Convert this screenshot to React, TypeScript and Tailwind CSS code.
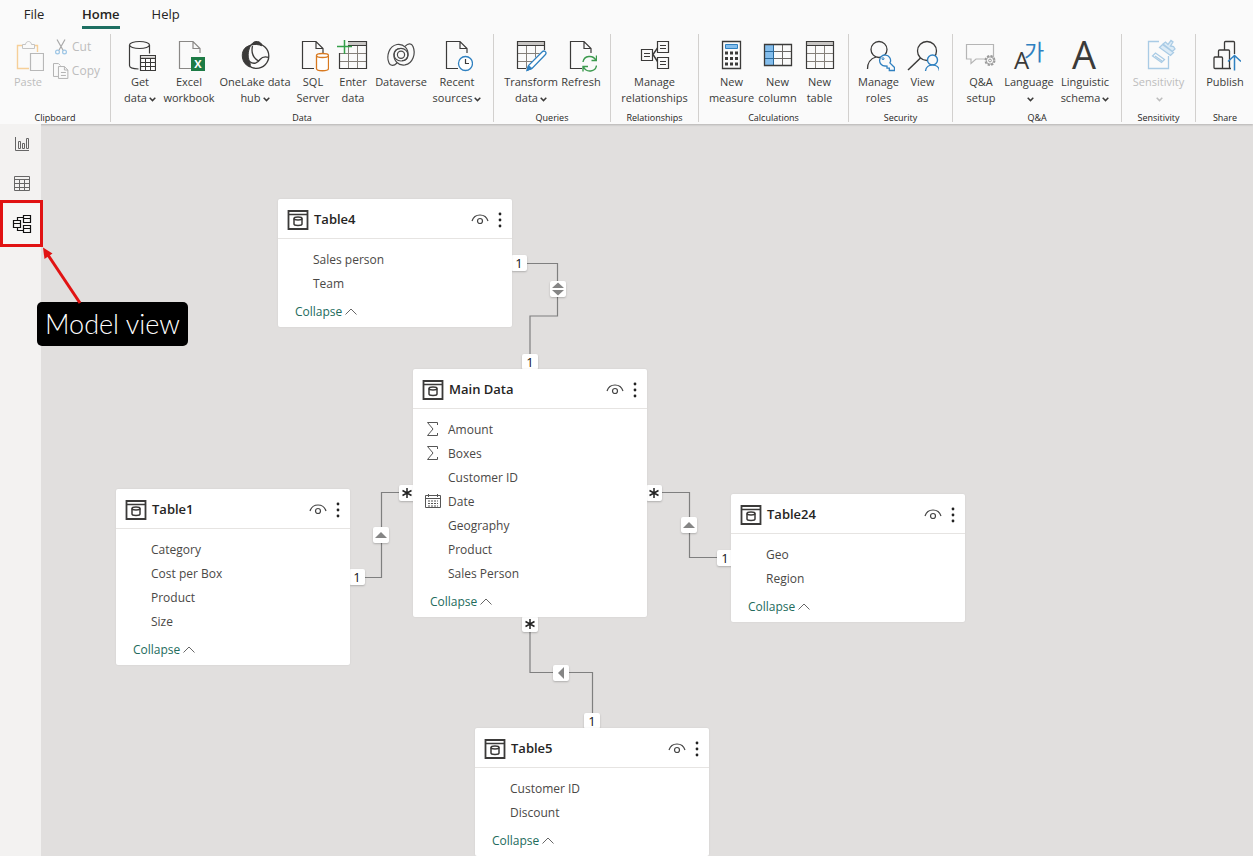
import type { ReactNode } from "react";

const INK = "#3b3a39";
const BLUE = "#2f80c0";

function Icon({ children, className = "" }: { children: ReactNode; className?: string }) {
  return (
    <svg
      width="32"
      height="32"
      viewBox="0 0 32 32"
      fill="none"
      stroke={INK}
      aria-hidden="true"
      className={`shrink-0 ${className}`}
    >
      {children}
    </svg>
  );
}

function PasteIcon() {
  return (
    <Icon>
      <path d="M17 28.5H5.5v-23H10M22 5.5h3.5V12" stroke="#f6cf98" strokeWidth="1.4" />
      <path d="M10.5 8.5v-4h3c.4-4 5.600-4 6 0h3v4z" stroke="#c4c4c4" />
      <path d="M18.500 13.500h13v17h-13z" fill="#fafafa" stroke="#b8b8b8" strokeWidth="1.200" />
    </Icon>
  );
}

function CutIcon() {
  return (
    <svg width="18" height="18" viewBox="0 0 18 18" fill="none" stroke="#a9a9a9" strokeWidth="1.2" aria-hidden="true">
      <path d="M5 1.500 11.500 13M13 1.500 6.500 13" />
      <circle cx="5.500" cy="14" r="1.900" stroke="#9dc6e6" />
      <circle cx="12.500" cy="14" r="1.900" stroke="#9dc6e6" />
    </svg>
  );
}

function CopyIcon() {
  return (
    <svg width="18" height="18" viewBox="0 0 18 18" fill="none" stroke="#b3b3b3" aria-hidden="true">
      <path d="M6 14.500H1.500v-13h5l2 2" />
      <path d="M6.500 4.500h6l3.500 3.500v8.500H6.500z M12.500 4.500V8H16M9 10.500h5M9 13.500h5" />
    </svg>
  );
}

function GetDataIcon() {
  return (
    <Icon>
      <ellipse cx="15.500" cy="5" rx="10" ry="3.500" strokeWidth="1.200" />
      <path d="M5.500 5v20.500c0 2 3.500 3.300 9 3.500M25.500 5v8.500" strokeWidth="1.200" />
      <path d="M16.500 15.500h15v15h-15z" fill="#fff" strokeWidth="1.200" />
      <path d="M17 17.500h14" stroke="#c8c6c4" strokeWidth="2" />
      <path d="M16.500 18.500h15M16.500 22.500h15M16.500 26.500h15M21.500 18v12.500M26.500 18v12.500" />
    </Icon>
  );
}

function DocShape({ color = INK }: { color?: string }) {
  return <path d="M18 28.500H6.500v-27H20l7 7V13M20 1.500v7h7" stroke={color} strokeWidth="1.200" />;
}

function ExcelIcon() {
  return (
    <Icon>
      <DocShape color="#8a8886" />
      <path d="M18 17h14v14H18z" fill="#1d7b45" stroke="none" />
      <text x="25" y="28" textAnchor="middle" fontSize="11" fontWeight="700" fill="#fff" stroke="none" fontFamily="Open Sans, sans-serif">
        X
      </text>
    </Icon>
  );
}

function OneLakeIcon() {
  return (
    <Icon>
      <circle cx="17.500" cy="16" r="12.300" strokeWidth="1.300" />
      <path d="M11.500 5.500C5 6.500 2.500 12 3.500 18c.8 4.500 3.500 7.500 7.500 9 .5-2 .2-4-.6-6C8.700 17 8.500 12 11.500 5.500z" fill={INK} />
      <path d="M12.500 5C13.500 1 20 0 22.500 4c.3.500.4 1.200.3 1.800-3.200-1.500-7-1.700-10.300-.8z" fill={INK} />
      <path d="M13.500 6C12 12.500 14.500 18 19.500 21M10.500 21.500c4.500 3.300 8 1.500 10.500-2 2-2.500 5.300-3.200 8.500-2.200" strokeWidth="1.300" />
    </Icon>
  );
}

function SqlIcon() {
  return (
    <Icon>
      <g transform="translate(-1 0)">
        <DocShape />
      </g>
      <path d="M19.500 15.500v13c0 3 12 3 12 0v-13" fill="#fff" stroke="#d8791f" strokeWidth="1.300" />
      <ellipse cx="25.500" cy="15.500" rx="6" ry="2" fill="#fff" stroke="#d8791f" strokeWidth="1.300" />
    </Icon>
  );
}

function TableIcon({ plus = false }: { plus?: boolean }) {
  return (
    <Icon>
      <path d="M3 2h26v3H3z" fill="#c8c6c4" stroke="none" />
      <path d="M2.500 13.500h27M2.500 21.500h27M11.500 5.500v23M20.500 5.500v23" stroke="#85807a" />
      <path d="M2.500 1.500h27v27h-27z M2.500 5.500h27" strokeWidth="1.200" />
      {plus && (
        <>
          <path d="M0 0h11v13H0z" fill="#fafafa" stroke="none" />
          <path d="M7.500-1v15M0 6.500h15" stroke="#35a04a" strokeWidth="1.500" />
        </>
      )}
    </Icon>
  );
}

function DataverseIcon() {
  const arm =
    "M12 23C9 26 5.500 26.500 4 23 1 16 4 6 12 4.500 19 3.500 23.500 9 23 15 22.500 19 19.500 21 16 21 12 21 9 18 9 14.500 9 11 12 8.500 15 8.700";
  return (
    <Icon>
      <g strokeWidth="1.200" stroke="#4a4a4a">
        <path d={arm} />
        <path d={arm} transform="rotate(180 16 14.700)" />
        <circle cx="16" cy="14.700" r="3.600" />
      </g>
    </Icon>
  );
}

function RecentIcon() {
  return (
    <Icon>
      <g transform="translate(-1 0)">
        <DocShape />
      </g>
      <circle cx="24.500" cy="23.500" r="7" fill="#fff" stroke={BLUE} strokeWidth="1.300" />
      <path d="M24.500 19v4.500H28" strokeWidth="1.200" />
    </Icon>
  );
}

function TransformIcon() {
  return (
    <Icon>
      <path d="M3 2h26v3H3z" fill="#c8c6c4" stroke="none" />
      <path d="M2.500 13.500h22M2.500 21.500h15M11.500 5.500v23M20.500 5.500v12" stroke="#85807a" />
      <path d="M11 28.500H2.500v-27h27V10M2.500 5.500h27" strokeWidth="1.200" />
      <path d="M12 30.500l1.500-5L27 12c2.500-2.500 5.500.5 3 3L17 28.500z" fill="#fff" stroke={BLUE} strokeWidth="1.300" />
      <path d="M12 30.500l1.500-5 3.500 3z" fill={BLUE} stroke={BLUE} />
    </Icon>
  );
}

function RefreshIcon() {
  return (
    <Icon>
      <g transform="translate(-1 0)">
        <DocShape />
      </g>
      <path d="M17 15h15v16H17z" fill="#fafafa" stroke="none" />
      <path d="M18 22c1-6.500 10-7.500 13-1.500M31.500 25.500c-1 6.500-10 7.500-13 1.500M31.500 15.500v5h-5M18 31.500v-5h5" stroke="#3c9a4e" strokeWidth="1.400" />
    </Icon>
  );
}

function RelationshipsIcon() {
  return (
    <Icon>
      <path d="M14 14.500 18.500 8M14 14.500l4.500 7" strokeWidth="1.400" />
      <path d="M2.500 9.500h11v11h-11zM18.500 1.500h11v11h-11zM18.500 17.500h11v11h-11z" strokeWidth="1.200" />
      <path d="M5 13.500h6M5 16.500h6M21 5.500h6M21 8.500h6M21 21.500h6M21 24.500h6" />
    </Icon>
  );
}

function MeasureIcon() {
  return (
    <Icon>
      <path d="M6.500 1.500h18v27h-18z" strokeWidth="1.300" />
      <path d="M9.500 4.500h12v4h-12z" fill="#83bdec" stroke={BLUE} />
      <path d="M9 13h3M14 13h3M19 13h3M9 18.500h3M14 18.500h3M19 18.500h3M9 24h3M14 24h3M19 24h3" strokeWidth="3" />
    </Icon>
  );
}

function ColumnIcon() {
  return (
    <Icon>
      <path d="M3 5h8v20H3z" fill="#83bdec" stroke="none" />
      <path d="M11.500 11.500h18M11.500 18.500h18M20.500 4.500v21" stroke="#6b6865" />
      <path d="M2.500 11.500h9M2.500 18.500h9M11.500 4.500v21" stroke="#28689b" />
      <path d="M2.500 4.500h27v21h-27z" strokeWidth="1.300" />
    </Icon>
  );
}

function RolesIcon() {
  return (
    <Icon>
      <circle cx="16" cy="9.500" r="8" strokeWidth="1.300" />
      <path d="M4.500 29c0-6.500 3.500-10.500 8.500-12" strokeWidth="1.300" />
      <path
        d="M27.500 21.500a5.500 5.500 0 1 0-5.500 4.500l2 .2v2h2.300v2.300h5.200v-3l-4.600-4.600z"
        fill="#fafafa"
        stroke={BLUE}
        strokeWidth="1.300"
      />
      <circle cx="20" cy="18.700" r="1" stroke={BLUE} />
    </Icon>
  );
}

function ViewAsIcon() {
  return (
    <Icon>
      <circle cx="20" cy="11" r="9.500" strokeWidth="1.300" />
      <path d="M13.500 18 1 30" strokeWidth="1.500" />
      <circle cx="25.500" cy="20" r="5" fill="#fafafa" stroke={BLUE} strokeWidth="1.400" />
      <path d="M18.500 31c.5-8 13.500-8 14 0" fill="#fafafa" stroke={BLUE} strokeWidth="1.400" />
    </Icon>
  );
}

function QnaIcon() {
  return (
    <Icon>
      <path d="M1.500 4.500h27v14.500H11l-5 4.500V19H1.500z" stroke="#b5b5b5" strokeWidth="1.200" />
      <circle cx="25" cy="20.500" r="4.500" fill="#fafafa" stroke="#999" strokeWidth="2" strokeDasharray="2.200 1.330" />
      <circle cx="25" cy="20.500" r="3.700" fill="#fafafa" stroke="#999" />
      <circle cx="25" cy="20.500" r="1.400" stroke="#999" />
    </Icon>
  );
}

function LanguageIcon() {
  return (
    <Icon className="overflow-visible">
      <text x="1" y="29" fontSize="24" fill={INK} stroke="none" fontFamily="Open Sans, sans-serif">
        A
      </text>
      <text x="11" y="20" fontSize="22" fill={BLUE} stroke="none" fontFamily="Noto Sans CJK KR, sans-serif">
        가
      </text>
    </Icon>
  );
}

function LinguisticIcon() {
  return (
    <Icon className="overflow-visible">
      <text x="15" y="29" textAnchor="middle" fontSize="38" fill={INK} stroke="none" fontFamily="Open Sans, sans-serif">
        A
      </text>
    </Icon>
  );
}

function SensitivityIcon() {
  return (
    <Icon className="overflow-visible">
      <g stroke="#a9cbe5" strokeWidth="1.300">
        <path d="M16 1.500H5.500v27h20V16" />
        <path d="M9.500 16l3-3 9 6.500-3 3z M12 16l7 5" />
        <path d="M16.500 7.500l3-3 11 8-3 3z M20 4l2.500-2 2.500 2.500 3-4 2 1.500-2.500 4 3 .5 1.500 2.500-2.500 2.500z" fill="#dcebf6" />
      </g>
    </Icon>
  );
}

function PublishIcon() {
  return (
    <Icon>
      <path d="M5.500 17h7a1 1 0 0 1 1 1v10.500H6a1 1 0 0 1-1-1V18a1 1 0 0 1 1-1M9.500 17v-6a1 1 0 0 1 1-1h9M13.500 28.500h7V11a1 1 0 0 0-1-1M15.500 10V2.500a1 1 0 0 1 1-1h8a1 1 0 0 1 1 1V14M20 28.500h2" strokeWidth="1.300" />
      <path d="M25.500 30.500v-15M19 21.500l6.500-6 6.500 6" stroke={BLUE} strokeWidth="1.500" />
    </Icon>
  );
}

function Chevron() {
  return (
    <svg width="7" height="5" viewBox="0 0 7 5" fill="none" stroke="currentColor" strokeWidth="1.500" aria-hidden="true" className="ml-0.5 inline-block align-middle">
      <path d="M.7.800 3.500 3.600 6.300.800" />
    </svg>
  );
}

type Command = {
  top: string;
  bottom?: string;
  icon: ReactNode;
  width: string;
  menu?: boolean;
  disabled?: boolean;
};

function RibbonButton({ top, bottom, icon, width, menu, disabled }: Command) {
  return (
    <button
      type="button"
      disabled={disabled}
      className={`flex shrink-0 flex-col items-center whitespace-nowrap text-[11px] leading-4 ${width} ${
        disabled ? "text-[#bdbdbd]" : "text-[#3b3a39]"
      }`}
    >
      {icon}
      <span className="mt-0.5">{top}</span>
      <span className="h-4">
        {bottom}
        {menu && <Chevron />}
      </span>
    </button>
  );
}

function RibbonGroup({ label, width, children }: { label: string; width: string; children: ReactNode }) {
  return (
    <section aria-label={label} className={`flex flex-col items-center justify-between ${width}`}>
      <div className="flex justify-center pt-1.5">{children}</div>
      <h2 className="text-[9px] leading-3 text-[#252423]">{label}</h2>
    </section>
  );
}

const groups: { label: string; width: string; commands: Command[] }[] = [
  {
    label: "Data",
    width: "w-[382px] shrink-0",
    commands: [
      { top: "Get", bottom: "data", menu: true, icon: <GetDataIcon />, width: "w-[42px]" },
      { top: "Excel", bottom: "workbook", icon: <ExcelIcon />, width: "w-14" },
      { top: "OneLake data", bottom: "hub", menu: true, icon: <OneLakeIcon />, width: "w-[76px]" },
      { top: "SQL", bottom: "Server", icon: <SqlIcon />, width: "w-10" },
      { top: "Enter", bottom: "data", icon: <TableIcon plus />, width: "w-10" },
      { top: "Dataverse", icon: <DataverseIcon />, width: "w-14" },
      { top: "Recent", bottom: "sources", menu: true, icon: <RecentIcon />, width: "w-14" },
    ],
  },
  {
    label: "Queries",
    width: "w-[116px] shrink-0",
    commands: [
      { top: "Transform", bottom: "data", menu: true, icon: <TransformIcon />, width: "w-[58px]" },
      { top: "Refresh", icon: <RefreshIcon />, width: "w-[42px]" },
    ],
  },
  {
    label: "Relationships",
    width: "w-[87px] shrink-0",
    commands: [{ top: "Manage", bottom: "relationships", icon: <RelationshipsIcon />, width: "w-20" }],
  },
  {
    label: "Calculations",
    width: "w-[149px] shrink-0",
    commands: [
      { top: "New", bottom: "measure", icon: <MeasureIcon />, width: "w-[50px]" },
      { top: "New", bottom: "column", icon: <ColumnIcon />, width: "w-[42px]" },
      { top: "New", bottom: "table", icon: <TableIcon />, width: "w-[42px]" },
    ],
  },
  {
    label: "Security",
    width: "w-[103px] shrink-0",
    commands: [
      { top: "Manage", bottom: "roles", icon: <RolesIcon />, width: "w-11" },
      { top: "View", bottom: "as", icon: <ViewAsIcon />, width: "w-11" },
    ],
  },
  {
    label: "Q&A",
    width: "w-[168px] shrink-0",
    commands: [
      { top: "Q&A", bottom: "setup", icon: <QnaIcon />, width: "w-[42px]" },
      { top: "Language", menu: true, icon: <LanguageIcon />, width: "w-[54px]" },
      { top: "Linguistic", bottom: "schema", menu: true, icon: <LinguisticIcon />, width: "w-[58px]" },
    ],
  },
  {
    label: "Sensitivity",
    width: "w-[73px] shrink-0",
    commands: [{ top: "Sensitivity", menu: true, disabled: true, icon: <SensitivityIcon />, width: "w-16" }],
  },
  {
    label: "Share",
    width: "w-[58px] shrink-0",
    commands: [{ top: "Publish", icon: <PublishIcon />, width: "w-12" }],
  },
];

function Divider() {
  return <div className="mb-0.5 w-px shrink-0 bg-[#d2d0ce]" />;
}

function Ribbon() {
  return (
    <header className="relative z-10 shrink-0 bg-[#fafafa] shadow-[0_1px_2px_rgba(0,0,0,0.2)]">
      <nav className="flex h-[34px] items-start gap-5 pl-[15px] text-[13px] leading-5 text-[#252423]">
        <button type="button" className="w-[38px] pt-1">File</button>
        <button type="button" className="ml-[9px] border-b-3 border-[#1d6f62] pt-1 pb-0.5 font-semibold">Home</button>
        <button type="button" className="ml-3 pt-1">Help</button>
      </nav>
      <div className="flex h-[90px]">
        <RibbonGroup label="Clipboard" width="w-[110px] shrink-0">
          <RibbonButton top="Paste" icon={<PasteIcon />} width="w-9" disabled />
          <div className="-mt-0.5 ml-1.5 flex w-12 flex-col gap-1.5 text-xs leading-[18px] text-[#bdbdbd]">
            <button type="button" disabled className="flex items-center gap-0.5">
              <CutIcon />
              Cut
            </button>
            <button type="button" disabled className="flex items-center gap-0.5">
              <CopyIcon />
              Copy
            </button>
          </div>
        </RibbonGroup>
        {groups.map((g) => (
          <div key={g.label} className="flex">
            <Divider />
            <RibbonGroup label={g.label} width={g.width}>
              {g.commands.map((c) => (
                <RibbonButton key={`${c.top}${c.bottom}`} {...c} />
              ))}
            </RibbonGroup>
          </div>
        ))}
      </div>
    </header>
  );
}

function ViewRail() {
  return (
    <nav aria-label="Views" className="relative z-20 flex w-[41px] shrink-0 flex-col bg-[#f3f2f1]">
      <button type="button" aria-label="Report view" className="flex h-10 items-center justify-center pl-0.5">
        <svg width="20" height="20" viewBox="0 0 20 20" fill="none" stroke="#666" aria-hidden="true">
          <path d="M3.500 3v13.500H17M6.500 7.500h2v7h-2zM10.500 9.500h2v5h-2zM14.500 4.500h2v10h-2z" />
        </svg>
      </button>
      <button type="button" aria-label="Table view" className="flex h-10 items-center justify-center pl-0.5">
        <svg width="20" height="20" viewBox="0 0 20 20" fill="none" stroke="#666" aria-hidden="true">
          <path d="M2.500 2.500h15v14h-15zM2.500 5.500h15M2.500 9.500h15M2.500 13.500h15M7.500 5.500v11M12.500 5.500v11" />
        </svg>
      </button>
      <button
        type="button"
        aria-label="Model view"
        className="relative flex h-10 items-center justify-center border-l-3 border-[#1d6f62] bg-[#f7f6f5]"
      >
        <svg width="20" height="20" viewBox="0 0 20 20" fill="none" stroke="#111" strokeWidth="1.200" aria-hidden="true">
          <path d="M1.500 6.500h7v7h-7zM1.500 9.500h7M11.500 1.500h7v7h-7zM11.500 4.500h7M11.500 11.500h7v7h-7zM11.500 14.500h7M11.500 3.500h-6v3M5.500 13.500v3h6" />
        </svg>
        <span className="absolute -top-1 -left-[3px] h-[47px] w-[43px] border-3 border-[#e11313]" />
      </button>
    </nav>
  );
}

type Field = { name: string; kind?: "sum" | "date" };
type ModelTable = { name: string; place: string; fields: Field[] };

const tables: ModelTable[] = [
  { name: "Table4", place: "left-[237px] top-[75px]", fields: [{ name: "Sales person" }, { name: "Team" }] },
  {
    name: "Main Data",
    place: "left-[372px] top-[245px]",
    fields: [
      { name: "Amount", kind: "sum" },
      { name: "Boxes", kind: "sum" },
      { name: "Customer ID" },
      { name: "Date", kind: "date" },
      { name: "Geography" },
      { name: "Product" },
      { name: "Sales Person" },
    ],
  },
  {
    name: "Table1",
    place: "left-[75px] top-[365px]",
    fields: [{ name: "Category" }, { name: "Cost per Box" }, { name: "Product" }, { name: "Size" }],
  },
  { name: "Table24", place: "left-[690px] top-[370px]", fields: [{ name: "Geo" }, { name: "Region" }] },
  { name: "Table5", place: "left-[434px] top-[604px]", fields: [{ name: "Customer ID" }, { name: "Discount" }] },
];

function FieldIcon({ kind }: { kind?: Field["kind"] }) {
  if (kind === "sum")
    return (
      <svg width="16" height="16" viewBox="0 0 16 16" fill="none" stroke="#555" aria-hidden="true">
        <path d="M12.500 3V.500h-10L8 7l-5.500 6.500h10V11" />
      </svg>
    );
  if (kind === "date")
    return (
      <svg width="16" height="16" viewBox="0 0 16 16" fill="none" stroke="#555" aria-hidden="true">
        <path d="M.5 1.500h15v12H.5zM.5 4.500h15M3.500 0v3M12.500 0v3" />
        <path d="M3 7h10M3 9.500h10M3 12h10" strokeDasharray="2 1" />
      </svg>
    );
  return null;
}

function TableCard({ name, place, fields }: ModelTable) {
  return (
    <article className={`absolute w-[234px] rounded-xs bg-white shadow-[0_0_2px_rgba(0,0,0,0.08)] ${place}`}>
      <header className="flex h-10 items-center border-b border-[#e6e4e2] pr-2 pl-[9px]">
        <svg width="22" height="22" viewBox="0 0 22 22" fill="none" stroke={INK} strokeWidth="1.500" aria-hidden="true" className="mt-0.5">
          <path d="M1.500 2h19v18h-19z" strokeWidth="1.800" />
          <path d="M1.500 5.500h19" />
          <ellipse cx="11" cy="9.500" rx="4" ry="1.500" />
          <path d="M7 9.500v5.500c0 2 8 2 8 0V9.500" />
        </svg>
        <h3 className="ml-[5px] flex-1 pt-0.5 text-[13px] font-semibold text-[#252423]">{name}</h3>
        <button type="button" aria-label={`Hide ${name}`}>
          <svg width="18" height="14" viewBox="0 0 18 14" fill="none" stroke="#444" strokeWidth="1.200" aria-hidden="true">
            <path d="M1 9C3.500 1 14.500 1 17 9" />
            <circle cx="9" cy="9" r="2.500" />
          </svg>
        </button>
        <button type="button" aria-label={`More options for ${name}`} className="ml-[7px]">
          <svg width="8" height="18" viewBox="0 0 8 18" fill="#222" aria-hidden="true">
            <circle cx="4" cy="4" r="1.400" />
            <circle cx="4" cy="10" r="1.400" />
            <circle cx="4" cy="16" r="1.400" />
          </svg>
        </button>
      </header>
      <ul className="pt-[9px] text-xs leading-6 text-[#4a4846]">
        {fields.map((f) => (
          <li key={f.name} className="flex h-6 items-center pl-3">
            <span className="mr-[7px] w-4">
              <FieldIcon kind={f.kind} />
            </span>
            {f.name}
          </li>
        ))}
      </ul>
      <button type="button" className="flex h-[31px] items-center gap-[3px] pt-px pl-[17px] text-xs text-[#236b5c]">
        Collapse
        <svg width="12" height="8" viewBox="0 0 12 8" fill="none" stroke="#666" aria-hidden="true">
          <path d="M.5 6.500 6 1 11.500 6.500" />
        </svg>
      </button>
    </article>
  );
}

type Mark = "one" | "many" | "both" | "up" | "left";

const marks: { mark: Mark; place: string }[] = [
  { mark: "one", place: "left-[470px] top-[131px]" },
  { mark: "both", place: "left-[509px] top-[157px]" },
  { mark: "one", place: "left-[481px] top-[230px]" },
  { mark: "many", place: "left-[358px] top-[361px]" },
  { mark: "up", place: "left-[332px] top-[403px]" },
  { mark: "one", place: "left-[308px] top-[445px]" },
  { mark: "many", place: "left-[605px] top-[361px]" },
  { mark: "up", place: "left-[640px] top-[393px]" },
  { mark: "one", place: "left-[676px] top-[426px]" },
  { mark: "many", place: "left-[481px] top-[492px]" },
  { mark: "left", place: "left-[512px] top-[541px]" },
  { mark: "one", place: "left-[543px] top-[589px]" },
];

function MarkGlyph({ mark }: { mark: Mark }) {
  if (mark === "one") return <>1</>;
  return (
    <svg width="16" height="16" viewBox="0 0 16 16" fill="#858585" aria-hidden="true">
      {mark === "many" && <path d="M8 3v10M3.500 5.500l9 5M3.500 10.500l9-5" stroke="#222" strokeWidth="1.500" />}
      {mark === "both" && <path d="M2 7 8 1.500 14 7zM2 9l6 5.500L14 9z" />}
      {mark === "up" && <path d="M2 11 8 5l6 6z" />}
      {mark === "left" && <path d="M11 2 5 8l6 6z" />}
    </svg>
  );
}

function ModelCanvas() {
  return (
    <main className="relative min-w-0 flex-1 overflow-hidden bg-[#e1dfde]">
      <svg width="930" height="732" viewBox="0 0 930 732" fill="none" stroke="#7f7f7f" aria-hidden="true" className="absolute top-0 left-0">
        <path d="M478 139.500h38.500v52.500H489V238" strokeWidth="1.200" />
        <path d="M366 368.500h-25.500v85H316" strokeWidth="1.200" />
        <path d="M613 368.500h35.500v65H684" strokeWidth="1.200" />
        <path d="M489 500v48.500h62.500V597" strokeWidth="1.200" />
      </svg>
      {marks.map(({ mark, place }) => (
        <div
          key={place}
          className={`absolute flex size-4 items-center justify-center rounded-xs bg-white text-[13px] leading-4 font-medium text-[#111] shadow-[0_1px_2px_rgba(0,0,0,0.22)] ${place}`}
        >
          <MarkGlyph mark={mark} />
        </div>
      ))}
      {tables.map((t) => (
        <TableCard key={t.name} {...t} />
      ))}
    </main>
  );
}

function Callout() {
  return (
    <div className="pointer-events-none absolute top-[246px] left-[37px] z-30">
      <svg width="50" height="58" viewBox="0 0 50 58" fill="#e11313" aria-hidden="true">
        <path d="M43 57 11 9" stroke="#e11313" strokeWidth="3" />
        <path d="M6 1.500 15.500 7.500 7.500 13z" />
      </svg>
      <p className="-mt-0.5 flex h-11 w-[151px] items-center justify-center rounded-[5px] bg-black font-['Lato',sans-serif] text-[27px] font-light whitespace-nowrap text-white">
        Model view
      </p>
    </div>
  );
}

export default function App() {
  return (
    <div className="relative flex h-screen flex-col overflow-hidden font-['Open_Sans','Noto_Sans',sans-serif]">
      <Ribbon />
      <div className="flex min-h-0 flex-1">
        <ViewRail />
        <ModelCanvas />
      </div>
      <Callout />
    </div>
  );
}
